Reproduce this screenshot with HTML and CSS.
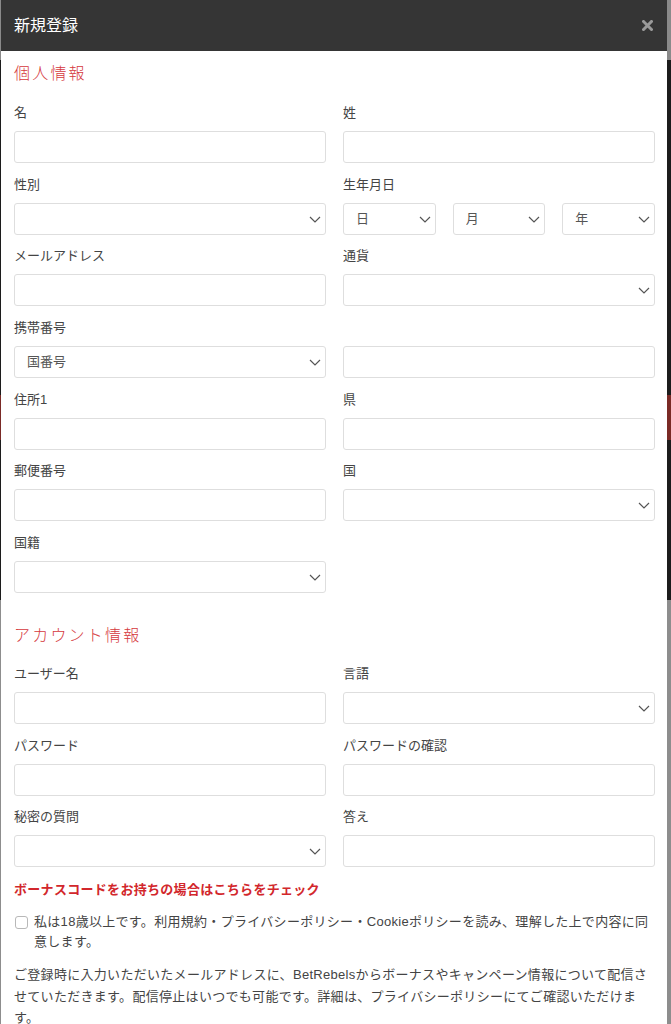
FILE: index.html
```html
<!DOCTYPE html>
<html lang="ja">

<head>
    <meta charset="UTF-8">
    <meta name="viewport" content="width=device-width, initial-scale=1.0">
    <title>新規登録</title>
    <link rel="stylesheet" href="styles.css">
</head>

<body>
    <div class="modal">
        <div class="modal-header">
            <h4 class="modal-title">新規登録</h4>
            <button class="close" type="button" aria-label="閉じる">
                <svg width="11" height="11" viewBox="0 0 11 11">
                    <path d="M1.5 1.5 L9.5 9.5 M9.5 1.5 L1.5 9.5" stroke="#9a9a9a" stroke-width="3" stroke-linecap="square" />
                </svg>
            </button>
        </div>

        <form class="modal-body" action="">
            <h3 class="section-title">個人情報</h3>
            <div class="fields">
                <div class="field">
                    <label for="firstname">名</label>
                    <input id="firstname" class="control" type="text">
                </div>
                <div class="field">
                    <label for="lastname">姓</label>
                    <input id="lastname" class="control" type="text">
                </div>

                <div class="field">
                    <label for="gender">性別</label>
                    <div class="select">
                        <select id="gender" class="control"><option></option></select>
                        <svg class="chevron" width="12" height="7" viewBox="0 0 12 7"><path d="M1 1 L6 6 L11 1" /></svg>
                    </div>
                </div>
                <div class="field">
                    <label>生年月日</label>
                    <div class="birth">
                        <div class="select">
                            <select class="control"><option>日</option></select>
                            <svg class="chevron" width="12" height="7" viewBox="0 0 12 7"><path d="M1 1 L6 6 L11 1" /></svg>
                        </div>
                        <div class="select">
                            <select class="control"><option>月</option></select>
                            <svg class="chevron" width="12" height="7" viewBox="0 0 12 7"><path d="M1 1 L6 6 L11 1" /></svg>
                        </div>
                        <div class="select">
                            <select class="control"><option>年</option></select>
                            <svg class="chevron" width="12" height="7" viewBox="0 0 12 7"><path d="M1 1 L6 6 L11 1" /></svg>
                        </div>
                    </div>
                </div>

                <div class="field">
                    <label for="email">メールアドレス</label>
                    <input id="email" class="control" type="email">
                </div>
                <div class="field">
                    <label for="currency">通貨</label>
                    <div class="select">
                        <select id="currency" class="control"><option></option></select>
                        <svg class="chevron" width="12" height="7" viewBox="0 0 12 7"><path d="M1 1 L6 6 L11 1" /></svg>
                    </div>
                </div>

                <div class="field">
                    <label for="phonecode">携帯番号</label>
                    <div class="select">
                        <select id="phonecode" class="control"><option>国番号</option></select>
                        <svg class="chevron" width="12" height="7" viewBox="0 0 12 7"><path d="M1 1 L6 6 L11 1" /></svg>
                    </div>
                </div>
                <div class="field">
                    <label>&nbsp;</label>
                    <input class="control" type="tel">
                </div>

                <div class="field">
                    <label for="address">住所1</label>
                    <input id="address" class="control" type="text">
                </div>
                <div class="field">
                    <label for="prefecture">県</label>
                    <input id="prefecture" class="control" type="text">
                </div>

                <div class="field">
                    <label for="zip">郵便番号</label>
                    <input id="zip" class="control" type="text">
                </div>
                <div class="field">
                    <label for="country">国</label>
                    <div class="select">
                        <select id="country" class="control"><option></option></select>
                        <svg class="chevron" width="12" height="7" viewBox="0 0 12 7"><path d="M1 1 L6 6 L11 1" /></svg>
                    </div>
                </div>

                <div class="field">
                    <label for="nationality">国籍</label>
                    <div class="select">
                        <select id="nationality" class="control"><option></option></select>
                        <svg class="chevron" width="12" height="7" viewBox="0 0 12 7"><path d="M1 1 L6 6 L11 1" /></svg>
                    </div>
                </div>
            </div>

            <h3 class="section-title second">アカウント情報</h3>
            <div class="fields">
                <div class="field">
                    <label for="username">ユーザー名</label>
                    <input id="username" class="control" type="text">
                </div>
                <div class="field">
                    <label for="language">言語</label>
                    <div class="select">
                        <select id="language" class="control"><option></option></select>
                        <svg class="chevron" width="12" height="7" viewBox="0 0 12 7"><path d="M1 1 L6 6 L11 1" /></svg>
                    </div>
                </div>

                <div class="field">
                    <label for="password">パスワード</label>
                    <input id="password" class="control" type="password">
                </div>
                <div class="field">
                    <label for="password2">パスワードの確認</label>
                    <input id="password2" class="control" type="password">
                </div>

                <div class="field">
                    <label for="question">秘密の質問</label>
                    <div class="select">
                        <select id="question" class="control"><option></option></select>
                        <svg class="chevron" width="12" height="7" viewBox="0 0 12 7"><path d="M1 1 L6 6 L11 1" /></svg>
                    </div>
                </div>
                <div class="field">
                    <label for="answer">答え</label>
                    <input id="answer" class="control" type="text">
                </div>
            </div>

            <a class="bonus" href="#">ボーナスコードをお持ちの場合はこちらをチェック</a>

            <label class="agree">
                <input class="check" type="checkbox">
                <span>私は18歳以上です。利用規約・プライバシーポリシー・Cookieポリシーを読み、理解した上で内容に同意します。</span>
            </label>

            <p class="notice">ご登録時に入力いただいたメールアドレスに、BetRebelsからボーナスやキャンペーン情報について配信させていただきます。配信停止はいつでも可能です。詳細は、プライバシーポリシーにてご確認いただけます。</p>
        </form>
    </div>
</body>

</html>
```

FILE: styles.css
```css
* {
    box-sizing: border-box;
}

body {
    margin: 0;
    font-family: "Liberation Sans", "Noto Sans CJK JP", sans-serif;
    font-size: 13px;
    color: #444;
    background: linear-gradient(#8a8a8a 0, #8a8a8a 60px, #1c1c1c 60px, #1c1c1c 395px, #7a2a26 395px, #7a2a26 440px, #1c1c1c 440px, #1c1c1c 600px, #8d8d8d 600px);
    height: 1024px;
    overflow: hidden;
}

.modal {
    width: 666px;
    margin-left: 1px;
    background: #fff;
    min-height: 1024px;
}

.modal-header {
    height: 51px;
    background-color: #353535;
    display: flex;
    align-items: center;
    justify-content: space-between;
    padding: 0 13px;
}

.modal-title {
    margin: 0;
    font-size: 16px;
    font-weight: normal;
    color: #fff;
    line-height: 20px;
}

.close {
    border: none;
    background: none;
    padding: 0;
    margin-right: 1px;
    display: flex;
}

.modal-body {
    padding: 12px 12px 0 13px;
}

.section-title {
    margin: 0 0 19px;
    font-size: 16px;
    font-weight: 300;
    letter-spacing: 2.2px;
    line-height: 22px;
    color: #d5383c;
}

.section-title.second {
    margin-top: 32px;
    margin-bottom: 18px;
}

.fields {
    display: grid;
    grid-template-columns: 1fr 1fr;
    column-gap: 17px;
    row-gap: 12.67px;
}

.field label {
    display: block;
    line-height: 18px;
    margin-bottom: 9px;
    color: #444;
}

.control {
    display: block;
    width: 100%;
    height: 32px;
    border: 1px solid #dedede;
    border-radius: 3px;
    background: #fff;
    font-family: inherit;
    font-size: 13px;
    color: #555;
    padding: 0 12px;
    outline: none;
}

select.control {
    appearance: none;
    -webkit-appearance: none;
}

.select {
    position: relative;
}

.chevron {
    position: absolute;
    right: 5px;
    top: 13px;
    pointer-events: none;
}

.chevron path {
    fill: none;
    stroke: #555;
    stroke-width: 1.2;
}

.birth {
    display: grid;
    grid-template-columns: 1fr 1fr 1fr;
    column-gap: 17px;
}

.bonus {
    display: block;
    margin-top: 14px;
    line-height: 18px;
    font-weight: bold;
    letter-spacing: 0.3px;
    color: #d2272c;
    text-decoration: none;
}

.agree {
    display: flex;
    align-items: flex-start;
    margin-top: 13px;
    line-height: 20px;
    letter-spacing: 0.3px;
}

.check {
    appearance: none;
    -webkit-appearance: none;
    flex: none;
    width: 13px;
    height: 13px;
    margin: 4px 6px 0 1px;
    border: 1px solid #b8b8b8;
    border-radius: 3px;
    background: #fff;
}

.notice {
    margin: 12px 0 0;
    line-height: 21.5px;
    letter-spacing: 0.3px;
}
```
